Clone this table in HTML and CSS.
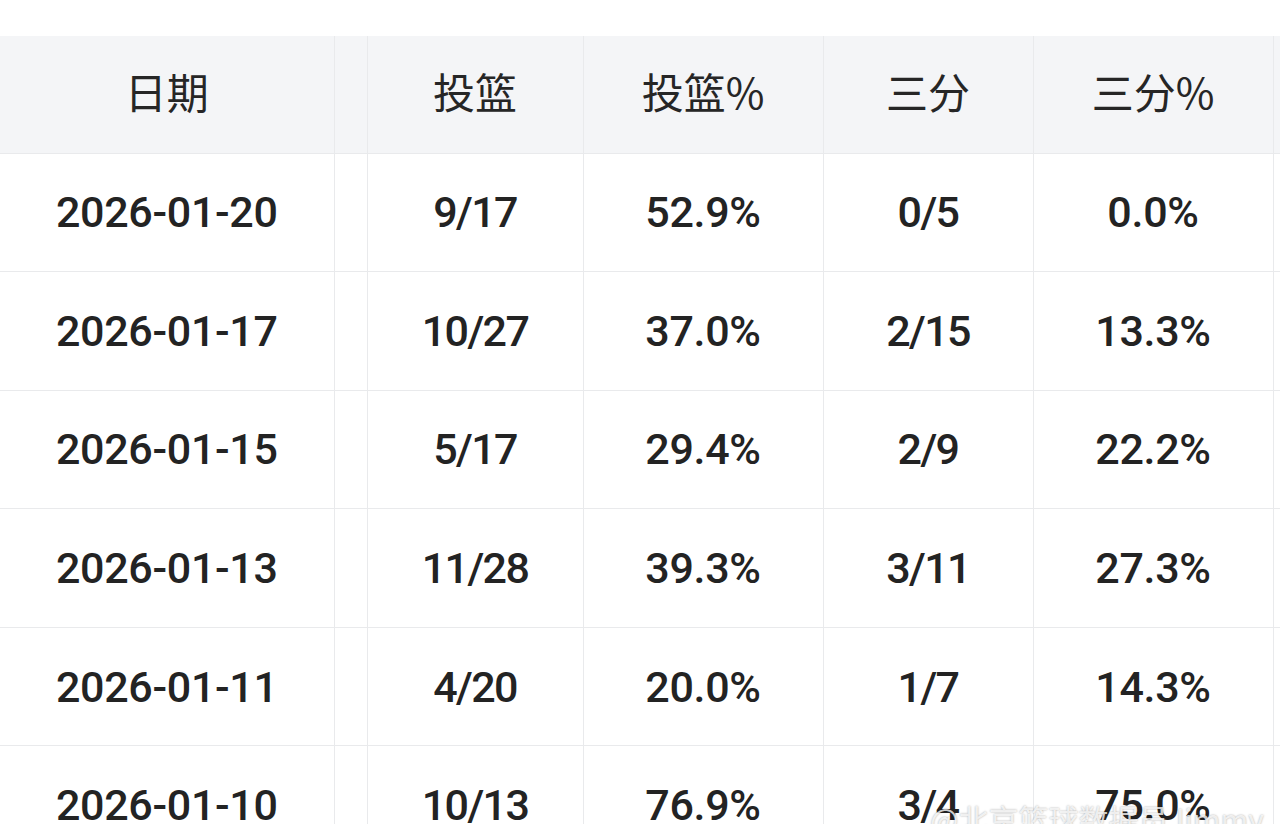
FILE: index.html
```html
<!DOCTYPE html>
<html lang="zh-CN">
<head>
<meta charset="utf-8">
<title>投篮数据</title>
<link rel="stylesheet" href="styles.css">
</head>
<body>
<div class="page">
  <table class="stats">
    <colgroup>
      <col class="c-date">
      <col class="c-gap">
      <col class="c-fg">
      <col class="c-fgp">
      <col class="c-tp">
      <col class="c-tpp">
      <col class="c-rest">
    </colgroup>
    <thead>
      <tr>
        <th>日期</th>
        <th></th>
        <th>投篮</th>
        <th>投篮%</th>
        <th>三分</th>
        <th>三分%</th>
        <th></th>
      </tr>
    </thead>
    <tbody>
      <tr><td>2026-01-20</td><td></td><td class="frac">9/17</td><td>52.9%</td><td class="frac">0/5</td><td>0.0%</td><td></td></tr>
      <tr><td>2026-01-17</td><td></td><td class="frac">10/27</td><td>37.0%</td><td class="frac">2/15</td><td>13.3%</td><td></td></tr>
      <tr><td>2026-01-15</td><td></td><td class="frac">5/17</td><td>29.4%</td><td class="frac">2/9</td><td>22.2%</td><td></td></tr>
      <tr><td>2026-01-13</td><td></td><td class="frac">11/28</td><td>39.3%</td><td class="frac">3/11</td><td>27.3%</td><td></td></tr>
      <tr><td>2026-01-11</td><td></td><td class="frac">4/20</td><td>20.0%</td><td class="frac">1/7</td><td>14.3%</td><td></td></tr>
      <tr><td>2026-01-10</td><td></td><td class="frac">10/13</td><td>76.9%</td><td class="frac">3/4</td><td>75.0%</td><td></td></tr>
    </tbody>
  </table>
  <div class="watermark">@北京篮球数据员Jimmy</div>
</div>
</body>
</html>
```

FILE: styles.css
```css
html, body {
  margin: 0;
  padding: 0;
  background: #ffffff;
  overflow: hidden;
}

.page {
  position: relative;
  width: 1280px;
  height: 824px;
  overflow: hidden;
  padding-top: 36px;
  box-sizing: border-box;
}

.stats {
  border-collapse: collapse;
  table-layout: fixed;
  width: 1400px;
  color: #232323;
}

.c-date { width: 334px; }
.c-gap { width: 33px; }
.c-fg { width: 216px; }
.c-fgp { width: 240px; }
.c-tp { width: 210px; }
.c-tpp { width: 240px; }
.c-rest { width: 127px; }

.stats th,
.stats td {
  border: 1px solid #e9eaec;
  text-align: center;
  vertical-align: middle;
  padding: 0;
}

.stats tr > :first-child {
  border-left: none;
}

.stats thead tr {
  height: 117px;
}

.stats thead th {
  background: #f4f5f7;
  border-top: none;
  padding-bottom: 8px;
  font-family: "Noto Sans CJK SC", "Noto Sans", sans-serif;
  font-weight: 400;
  font-size: 42px;
  color: #262626;
}

.stats tbody tr {
  height: 118.6px;
}

.stats tbody td {
  font-family: Roboto, "Liberation Sans", sans-serif;
  font-weight: 500;
  font-size: 43px;
  letter-spacing: -0.3px;
}

.stats tbody td.frac {
  letter-spacing: -1.6px;
}

.watermark {
  position: absolute;
  left: 930px;
  top: 796px;
  font-family: "Noto Sans CJK SC", sans-serif;
  font-size: 30px;
  color: rgba(255, 255, 255, 0.8);
  text-shadow: 0 0 2px rgba(0, 0, 0, 0.35);
  white-space: nowrap;
}
```
